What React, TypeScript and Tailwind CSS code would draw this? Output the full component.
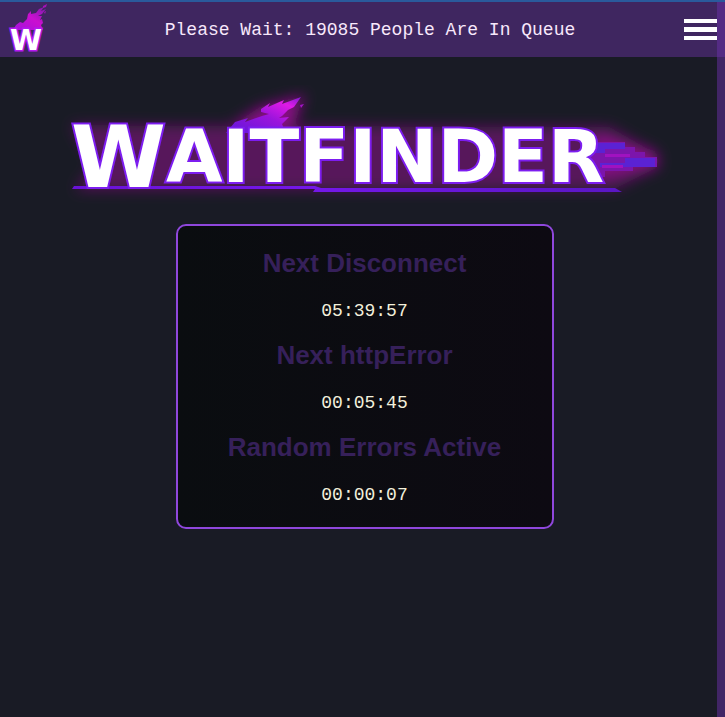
const ERRORS = [
  { name: "Next Disconnect", time: "05:39:57" },
  { name: "Next httpError", time: "00:05:45" },
  { name: "Random Errors Active", time: "00:00:07" },
];

const QUEUE_SIZE = 19085;

function LogoMark() {
  return (
    <svg viewBox="0 0 48 52" className="h-[52px] w-12" aria-hidden="true">
      <defs>
        <linearGradient id="mark-flame" x1="0" y1="1" x2="1" y2="0">
          <stop offset="0" stopColor="#a012dc" />
          <stop offset="0.55" stopColor="#cb0fd0" />
          <stop offset="1" stopColor="#7b1cab" />
        </linearGradient>
      </defs>
      <path
        d="M5 26 L8 21 L12 18 L15 19 L19 15 L20 10 L23 7 L23 10 L28 9 L31 5 L36 3 L33 7 L38 5 L34 10 L30 12 L34 12 L32 16 L34 15 L35 19 L33 21 L35 26 Z"
        fill="url(#mark-flame)"
      />
      <path d="M35 2 L39 0 L38 3 L35 4 Z M36 8 l2 -1 l-1 3 z" fill="#a312b8" />
      <text
        x="18"
        y="46"
        textAnchor="middle"
        fill="#fff"
        stroke="#b41af0"
        strokeWidth="3"
        paintOrder="stroke"
        className="font-['DejaVu_Sans',sans-serif] text-[29px] font-bold"
      >
        W
      </text>
    </svg>
  );
}

function Header() {
  return (
    <header className="flex items-center justify-between border-t-2 border-[#2a5a9c] bg-[#3f2660] px-2">
      <a href="#home" aria-label="Waitfinder home" className="flex h-[55px] items-center">
        <LogoMark />
      </a>
      <p className="text-center font-['Liberation_Mono',monospace] text-lg leading-6 text-[#f8e8fb]">
        Please Wait: {QUEUE_SIZE} People Are In Queue
      </p>
      <button type="button" aria-label="Menu" className="flex w-[33px] shrink-0 flex-col gap-1">
        <span className="h-1 bg-white" />
        <span className="h-[5px] bg-white" />
        <span className="h-1 bg-white" />
      </button>
    </header>
  );
}

function Wordmark() {
  return (
    <svg viewBox="0 0 620 130" className="w-full max-w-[620px]" role="img" aria-label="Waitfinder">
      <defs>
        <linearGradient id="flame" x1="0" y1="1" x2="1" y2="0">
          <stop offset="0" stopColor="#5d18d8" />
          <stop offset="0.5" stopColor="#9a14dc" />
          <stop offset="0.8" stopColor="#e01ae6" />
          <stop offset="1" stopColor="#7a1bd0" />
        </linearGradient>
        <linearGradient id="line" x1="0" x2="1">
          <stop offset="0" stopColor="#6a12d8" />
          <stop offset="0.45" stopColor="#7417e8" />
          <stop offset="1" stopColor="#5a16c4" />
        </linearGradient>
        <filter id="glow" x="-10%" y="-40%" width="120%" height="180%">
          <feGaussianBlur stdDeviation="7" />
        </filter>
      </defs>

      {/* haze behind the letters */}
      <g filter="url(#glow)" fill="#8a0f86">
        <path d="M16 40 L555 42 L604 70 L600 84 L560 104 L20 105 L40 80 Z" opacity="0.55" />
        <path d="M175 42 L205 22 L250 10 L236 45 Z" />
        <path d="M540 50 L600 66 L604 82 L540 92 Z" />
      </g>

      {/* flame */}
      <path
        d="M171 48 L180 37 L193 33 L190 37 L207 31 L214 29 L206 27 L206 24 L215 18 L213 22 L229 15 L227 19 L246 12 L239 22 L233 25 L227 31 L224 33 L234 32 L227 39 L231 48 Z"
        fill="url(#flame)"
      />
      <path d="M245 20 l4 -1 l-3 4 z" fill="#a414c8" />

      {/* glitch trail */}
      <path d="M535 57 H570 V62 H580 V67 H590 V72 H602 V82 H578 V86 H550 V92 H535 Z" fill="#7c15ab" />
      <path d="M535 58 H570 V64 H550 V68 H535 Z M570 73 H600 V82 H570 Z M545 78 H580 V82 H545 Z" fill="#5b22d4" />
      <path d="M550 69 H575 V72 H550 Z M547 80 H568 V83 H547 Z" fill="#a012c0" />

      {/* underline */}
      <path d="M19 101 L260 101 L266 103 L560 103 L567 107 L258 107 L260 104 L17 104 Z" fill="url(#line)" />

      <text
        x="16"
        y="102"
        fill="#fff"
        stroke="#7d1df0"
        strokeWidth="4"
        strokeLinejoin="miter"
        paintOrder="stroke"
        className="font-['DejaVu_Sans',sans-serif] text-[73px] font-bold"
      >
        <tspan className="text-[86px]">W</tspan>
        <tspan dy="-5">AITFINDER</tspan>
      </text>
    </svg>
  );
}

export default function App() {
  return (
    <div className="relative min-h-screen bg-[#191b25]">
      <Header />

      <main className="flex flex-col items-center pt-7 pr-2 pl-3">
        <h1 className="flex w-full justify-center">
          <Wordmark />
        </h1>

        <section className="mt-[9px] w-[378px] max-w-full rounded-[10px] border-2 border-[#8f47dc] bg-linear-to-r from-[#0a0d10] to-[#0d0a12] px-4 pt-[21px] pb-[22px] text-center">
          {ERRORS.map((error) => (
            <div key={error.name} className="mt-[18px] first:mt-0">
              <h2 className="font-['Liberation_Sans',sans-serif] text-[26px] leading-8 font-bold text-[#36205a]">
                {error.name}
              </h2>
              <p className="mt-[22px] font-['Liberation_Mono',monospace] text-lg leading-5 text-[#f3f0dc]">
                {error.time}
              </p>
            </div>
          ))}
        </section>
      </main>

      {/* scroll track */}
      <div className="absolute top-0.5 right-0 bottom-0 w-2 bg-[#6a30a8]/50" />
    </div>
  );
}
